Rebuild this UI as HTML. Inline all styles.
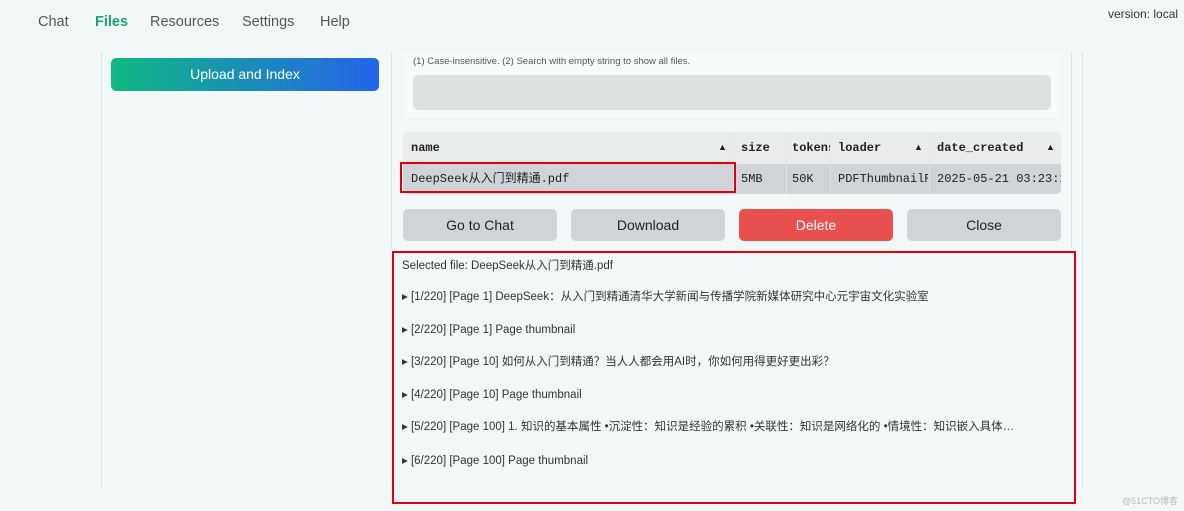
<!DOCTYPE html>
<html><head><meta charset="utf-8"><style>
body{margin:0;width:1184px;height:511px;background:#f2f8f8;font-family:"Liberation Sans","Noto Sans CJK SC",sans-serif;position:relative;overflow:hidden;color:#222}
.a{position:absolute}
.nav{top:14px;font-size:14.5px;color:#555}
.mono{font-family:"Liberation Mono","Noto Sans CJK SC",monospace;font-size:12px;line-height:16px;color:#222;white-space:nowrap}
.btn{position:absolute;top:209px;width:154px;height:32px;border-radius:5px;background:#d0d4d8;font-size:14px;text-align:center;line-height:32px;color:#222}
.item{position:absolute;left:402px;font-size:11.5px;line-height:16px;color:#333;white-space:nowrap}
</style></head><body>
<div class="a nav" style="left:38px">Chat</div>
<div class="a nav" style="left:95px;color:#1aa36e;font-weight:bold">Files</div>
<div class="a nav" style="left:150px">Resources</div>
<div class="a nav" style="left:242px">Settings</div>
<div class="a nav" style="left:320px">Help</div>
<div class="a" style="left:1108px;top:7px;font-size:12px;color:#333">version: local</div>
<div class="a" style="left:101px;top:52px;width:1px;height:436px;background:#dde3e3"></div>
<div class="a" style="left:391px;top:52px;width:1px;height:196px;background:#dde3e3"></div>
<div class="a" style="left:1071px;top:52px;width:1px;height:196px;background:#dde3e3"></div>
<div class="a" style="left:1082px;top:52px;width:1px;height:436px;background:#dde3e3"></div>
<div class="a" style="left:111px;top:58px;width:268px;height:33px;border-radius:5px;background:linear-gradient(90deg,#10b981,#2563eb);color:#fff;font-size:14px;text-align:center;line-height:33px">Upload and Index</div>
<div class="a" style="left:403px;top:52px;width:658px;height:66px;background:#f7fbfa;border-radius:0 0 8px 8px"></div>
<div class="a" style="left:413px;top:56px;font-size:9.5px;color:#555">(1) Case-insensitive. (2) Search with empty string to show all files.</div>
<div class="a" style="left:413px;top:75px;width:638px;height:35px;background:#dbe2e1;border-radius:5px"></div>
<div class="a" style="left:403px;top:132px;width:658px;height:62px;border-radius:5px;background:#d0d4d8;overflow:hidden">
<div class="a" style="left:0;top:0;width:658px;height:32px;background:#eaecea"></div>
</div>
<div class="a mono" style="left:411px;top:140px;font-weight:bold">name</div>
<div class="a" style="left:718px;top:142px;font-size:9px">▲</div>
<div class="a" style="left:733px;top:132px;width:1px;height:62px;background:#e4e6e6"></div>
<div class="a mono" style="left:741px;top:140px;font-weight:bold">size</div>
<div class="a" style="left:786px;top:132px;width:1px;height:62px;background:#e4e6e6"></div>
<div class="a mono" style="left:792px;top:140px;font-weight:bold;width:38px;overflow:hidden">tokens</div>
<div class="a" style="left:830px;top:132px;width:1px;height:62px;background:#e4e6e6"></div>
<div class="a mono" style="left:838px;top:140px;font-weight:bold">loader</div>
<div class="a" style="left:914px;top:142px;font-size:9px">▲</div>
<div class="a" style="left:929px;top:132px;width:1px;height:62px;background:#e4e6e6"></div>
<div class="a mono" style="left:937px;top:140px;font-weight:bold">date_created</div>
<div class="a" style="left:1046px;top:142px;font-size:9px">▲</div>
<div class="a" style="left:400px;top:162px;width:336px;height:31px;border:2px solid #e0000a;box-sizing:border-box"></div>
<div class="a mono" style="left:411px;top:171px">DeepSeek从入门到精通.pdf</div>
<div class="a mono" style="left:741px;top:171px">5MB</div>
<div class="a mono" style="left:792px;top:171px">50K</div>
<div class="a mono" style="left:838px;top:171px;width:90px;overflow:hidden">PDFThumbnailReader</div>
<div class="a mono" style="left:937px;top:171px;width:124px;overflow:hidden">2025-05-21 03:23:11</div>
<div class="btn" style="left:403px">Go to Chat</div>
<div class="btn" style="left:571px">Download</div>
<div class="btn" style="left:739px;background:#e84f4f;color:#fff">Delete</div>
<div class="btn" style="left:907px">Close</div>
<div class="a" style="left:392px;top:251px;width:684px;height:253px;border:2px solid #e0000a;box-sizing:border-box"></div>
<div class="item" style="top:258px">Selected file: DeepSeek从入门到精通.pdf</div>
<div class="item" style="top:289px">▸ [1/220] [Page 1] DeepSeek：从入门到精通清华大学新闻与传播学院新媒体研究中心元宇宙文化实验室</div>
<div class="item" style="top:322px">▸ [2/220] [Page 1] Page thumbnail</div>
<div class="item" style="top:354px">▸ [3/220] [Page 10] 如何从入门到精通？当人人都会用AI时，你如何用得更好更出彩？</div>
<div class="item" style="top:387px">▸ [4/220] [Page 10] Page thumbnail</div>
<div class="item" style="top:419px">▸ [5/220] [Page 100] 1. 知识的基本属性 •沉淀性：知识是经验的累积 •关联性：知识是网络化的 •情境性：知识嵌入具体…</div>
<div class="item" style="top:453px">▸ [6/220] [Page 100] Page thumbnail</div>
<div class="a" style="left:1122px;top:494px;font-size:9px;color:#bbb">@51CTO博客</div>
</body></html>
